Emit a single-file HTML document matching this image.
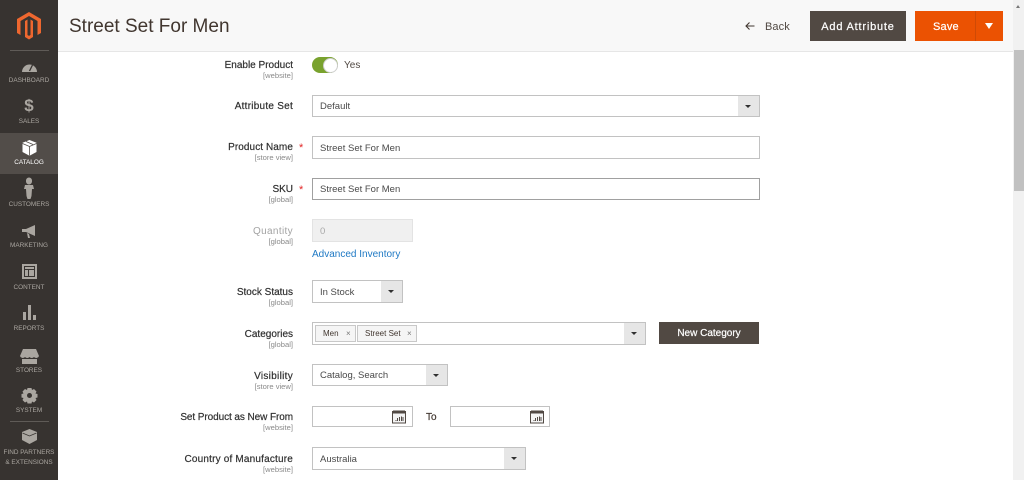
<!DOCTYPE html>
<html><head><meta charset="utf-8"><style>
*{box-sizing:border-box}
html,body{margin:0;padding:0;width:1024px;height:480px;overflow:hidden;background:#fff;font-family:"Liberation Sans",sans-serif;color:#41362f}
.a{position:absolute;white-space:nowrap}
#side{position:absolute;left:0;top:0;width:58px;height:480px;background:#373330}
.nav{position:absolute;left:0;width:58px;text-align:center;font-size:6.4px;color:#aaa6a0;line-height:9px;margin-top:1px}
.ic{position:absolute;left:0;top:0}
.l{position:absolute;right:731px;margin-top:1px;text-align:right;font-size:10px;color:#303030;white-space:nowrap;-webkit-text-stroke:.2px #303030}
.s{position:absolute;right:731px;text-align:right;font-size:7.6px;color:#8a8a8a;white-space:nowrap}
.r{position:absolute;left:299px;font-size:11px;color:#e22626}
.f{position:absolute;border:1px solid #c2c2c2;background:#fff;font-size:9.5px;color:#4a4a4a;padding:1px 0 0 7px;white-space:nowrap}
.c{position:absolute;right:0;top:0;bottom:0;width:21px;background:#e6e6e6}
.c:after{content:"";position:absolute;left:7px;top:50%;margin-top:-1.5px;border:3px solid transparent;border-top:3.5px solid #303030;border-bottom:0}
.tag{position:absolute;top:325px;height:17px;background:#f5f5f5;border:1px solid #c8c8c8;font-size:8px;line-height:15px;color:#41362f;padding-left:7px;white-space:nowrap}
</style></head><body>
<div id="side">
<svg class="ic" width="58" height="42" viewBox="0 0 58 42"><path d="M29 12l12 7v14l-3.500 2V21L29 16l-8.500 5v14L17 33V19z M25 21l2.500-1.500V35l1.500.9 1.500-.9V19.500L33 21v16l-4 2.500L25 37z" fill="#ee672f"/></svg>
<div class="a" style="left:10px;top:50px;width:39px;height:1px;background:#5f5b57"></div>
<svg class="ic" width="58" height="480" viewBox="0 0 58 480">
<path d="M22 72a7.500 7.500 0 0 1 15 0z" fill="#aaa6a0"/><path d="M29.500 71l3-6" stroke="#373330" stroke-width="1.300"/>
<path d="M26 180.500a3 3 0 0 1 6 0v1a3 3 0 0 1-6 0zM25 185h8l1 4-2 0-.5 7-1 3h-3l-1-3-.5-7-2 0z" fill="#aaa6a0"/>
<path d="M22 229h4l9-4v11l-9-4h-4zM27 233l1 5h2l-1-4z" fill="#aaa6a0"/>
<path fill-rule="evenodd" d="M22 264h15v15H22zM24 266v11h11v-11zM25 267h9v2h-9zM25 270h3v6h-3zM29 270h5v6h-5z" fill="#aaa6a0"/>
<path d="M23 312h3v8h-3zM28 305h3v15h-3zM33 315h3v5h-3z" fill="#aaa6a0"/>
<path d="M23 349h13l3 7a3 3 0 0 1-5 1 3 3 0 0 1-4.500 0 3 3 0 0 1-4.500 0 3 3 0 0 1-5-1zM22 359h15v5H22z" fill="#aaa6a0"/>
<path d="M27.500 388h4l.5 2 2-1 2.500 2.500-1 2 2 .5v3.500l-2 .5 1 2-2.500 2.500-2-1-.5 2h-4l-.5-2-2 1-2.500-2.500 1-2-2-.5v-3.500l2-.5-1-2 2.500-2.500 2 1z" fill="#aaa6a0"/><circle cx="29.500" cy="395.500" r="2.500" fill="#373330"/>
<path d="M29.500 429l7.500 3v8l-7.500 4-7.500-4v-8z" fill="#aaa6a0"/><path d="M22.500 433l7 3 7-3" stroke="#373330" fill="none" stroke-width=".8"/>
</svg>
<div class="a" style="left:10px;top:421px;width:39px;height:1px;background:#5f5b57"></div>
<div class="nav" style="top:75px">DASHBOARD</div>
<div class="a" style="left:0;width:58px;text-align:center;top:96px;font-size:17px;font-weight:700;color:#aaa6a0;line-height:20px">$</div>
<div class="nav" style="top:116px">SALES</div>
<div class="a" style="left:0;top:133px;width:58px;height:41px;background:#524d49"></div>
<svg class="ic" width="58" height="180"><path d="M29.500 140l7 2.800v9.200l-7 3.800-7-3.800v-9.200z" fill="#fff"/><path d="M22.500 143.500l7 3 7-3M29.500 146.500v9M26 141.500l7 3" stroke="#524d49" fill="none" stroke-width=".8"/></svg>
<div class="nav" style="top:157px;color:#fff">CATALOG</div>
<div class="nav" style="top:199px">CUSTOMERS</div>
<div class="nav" style="top:240px">MARKETING</div>
<div class="nav" style="top:282px">CONTENT</div>
<div class="nav" style="top:323px">REPORTS</div>
<div class="nav" style="top:365px">STORES</div>
<div class="nav" style="top:405px">SYSTEM</div>
<div class="nav" style="top:447px;line-height:10px">FIND PARTNERS<br>&amp; EXTENSIONS</div>
</div>

<div class="a" style="left:58px;top:0;width:955px;height:52px;background:#f8f8f8;border-bottom:1px solid #e6e6e6"></div>
<div class="a" style="left:69px;top:15px;font-size:19px;line-height:24px;color:#41362f">Street Set For Men</div>
<svg class="a" style="left:745px;top:21px" width="10" height="10"><path d="M9.500 5H1.200M4.500 1.500L1 5l3.500 3.500" stroke="#41362f" stroke-width="1.100" fill="none"/></svg>
<div class="a" style="left:765px;top:20px;font-size:11px;line-height:14px;letter-spacing:.1px;color:#514943">Back</div>
<div class="a" style="left:810px;top:11px;width:96px;height:30px;background:#514943;color:#fff;font-size:11px;line-height:32px;text-align:center;letter-spacing:.8px;-webkit-text-stroke:.2px #fff">Add Attribute</div>
<div class="a" style="left:915px;top:11px;width:88px;height:30px;background:#eb5202;color:#fff;font-size:11px;line-height:32px;letter-spacing:.2px;padding-left:18px;-webkit-text-stroke:.2px #fff">Save</div>
<div class="a" style="left:975px;top:11px;width:1px;height:30px;background:#cf4a05"></div>
<div class="a" style="left:985px;top:23px;border:4.500px solid transparent;border-top:6px solid #fff;border-bottom:0"></div>

<div class="a" style="left:1013px;top:0;width:11px;height:480px;background:#f1f1f1"></div>
<div class="a" style="left:1014px;top:50px;width:10px;height:141px;background:#c1c1c1"></div>
<div class="a" style="left:1016px;top:5px;border:2.500px solid transparent;border-bottom:3px solid #777;border-top:0"></div>

<div class="l" style="top:59px">Enable Product</div><div class="s" style="top:71px">[website]</div>
<div class="a" style="left:312px;top:57px;width:26px;height:16px;border-radius:8px;background:#79a22e"></div>
<div class="a" style="left:323px;top:57.500px;width:15px;height:15px;border-radius:50%;background:#fff;border:1px solid #cfcfcf"></div>
<div class="a" style="left:344px;top:60px;font-size:10px;line-height:12px;color:#514943">Yes</div>

<div class="l" style="top:100px;letter-spacing:.25px">Attribute Set</div>
<div class="f" style="left:312px;top:95px;width:448px;height:22px;line-height:20px">Default<span class="c"></span></div>

<div class="l" style="top:141px;letter-spacing:.08px">Product Name</div><div class="s" style="top:153px">[store view]</div><div class="r" style="top:142px">*</div>
<div class="f" style="left:312px;top:136px;width:448px;height:23px;line-height:21px">Street Set For Men</div>

<div class="l" style="top:183px">SKU</div><div class="s" style="top:195px">[global]</div><div class="r" style="top:184px">*</div>
<div class="f" style="left:312px;top:178px;width:448px;height:22px;line-height:20px;border-color:#a0a0a0">Street Set For Men</div>

<div class="l" style="top:225px;color:#a3a3a3;-webkit-text-stroke:0;letter-spacing:.35px">Quantity</div><div class="s" style="top:237px">[global]</div>
<div class="f" style="left:312px;top:219px;width:101px;height:23px;line-height:21px;background:#f0f0f0;border-color:#e3e3e3;color:#a8a8a8">0</div>
<div class="a" style="left:312px;top:249px;font-size:10px;line-height:12px;color:#1f79c4">Advanced Inventory</div>

<div class="l" style="top:286px">Stock Status</div><div class="s" style="top:298px">[global]</div>
<div class="f" style="left:312px;top:280px;width:91px;height:23px;line-height:21px">In Stock<span class="c"></span></div>

<div class="l" style="top:328px">Categories</div><div class="s" style="top:340px">[global]</div>
<div class="f" style="left:312px;top:322px;width:334px;height:23px"><span class="c"></span></div>
<div class="tag" style="left:315px;width:41px">Men<span class="a" style="left:30px;top:0;color:#777">×</span></div>
<div class="tag" style="left:357px;width:60px">Street Set<span class="a" style="left:49px;top:0;color:#777">×</span></div>
<div class="a" style="left:659px;top:322px;width:100px;height:22px;background:#514943;color:#fff;font-size:10px;line-height:24px;text-align:center;-webkit-text-stroke:.2px #fff">New Category</div>

<div class="l" style="top:370px;letter-spacing:.3px">Visibility</div><div class="s" style="top:382px">[store view]</div>
<div class="f" style="left:312px;top:364px;width:136px;height:22px;line-height:20px">Catalog, Search<span class="c"></span></div>

<div class="l" style="top:411px;letter-spacing:-.08px">Set Product as New From</div><div class="s" style="top:423px">[website]</div>
<div class="f" style="left:312px;top:406px;width:101px;height:21px"></div>
<div class="a" style="left:426px;top:412px;font-size:10px;line-height:12px;color:#41362f;-webkit-text-stroke:.2px #41362f">To</div>
<div class="f" style="left:450px;top:406px;width:100px;height:21px"></div>
<svg class="a" style="left:392px;top:409px" width="14" height="15"><path d="M.5 2.500h13v11.500H.5z" fill="#f4f4f4" stroke="#514943"/><path d="M1 1.500h12v3H1z" fill="#514943"/><path d="M3.500 11.500h1M5.500 9v3M7.500 8v4M9.500 7.500v4.500M11 8v4" stroke="#514943"/></svg>
<svg class="a" style="left:530px;top:409px" width="14" height="15"><path d="M.5 2.500h13v11.500H.5z" fill="#f4f4f4" stroke="#514943"/><path d="M1 1.500h12v3H1z" fill="#514943"/><path d="M3.500 11.500h1M5.500 9v3M7.500 8v4M9.500 7.500v4.500M11 8v4" stroke="#514943"/></svg>

<div class="l" style="top:453px;letter-spacing:.18px">Country of Manufacture</div><div class="s" style="top:465px">[website]</div>
<div class="f" style="left:312px;top:447px;width:214px;height:23px;line-height:21px">Australia<span class="c"></span></div>
</body></html>
